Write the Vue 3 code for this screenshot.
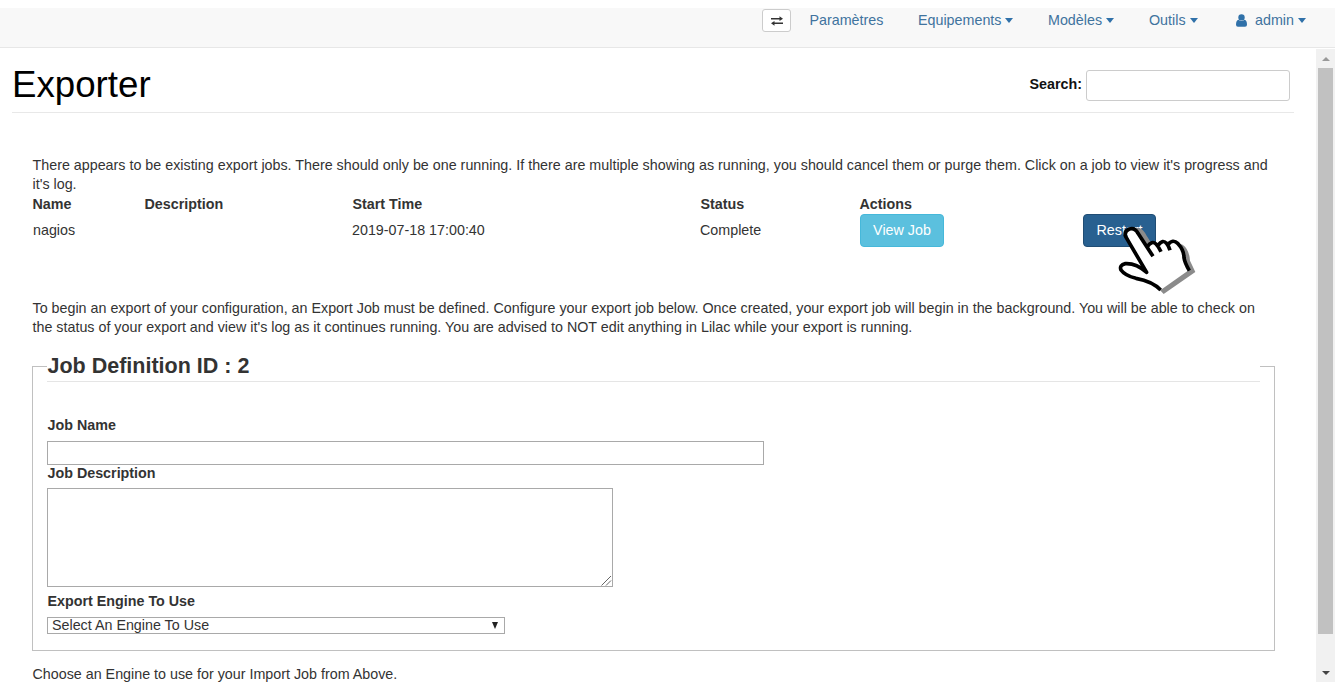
<script setup>
const menus = [
  { label: 'Equipements', cls: 'equipements' },
  { label: 'Modèles', cls: 'modeles' },
  { label: 'Outils', cls: 'outils' },
]
</script>

<template>
  <div class="page">
    <nav class="navbar">
      <button class="toggle" aria-label="Toggle">
        <svg width="14" height="10" viewBox="0 0 14 10">
          <path d="M1 2.7H10M4 7.3H13" stroke="#333" stroke-width="1.4" />
          <path d="M9.5 .3L13 2.7L9.5 5zM4.5 5L1 7.3L4.5 9.7z" fill="#333" />
        </svg>
      </button>
      <a class="item parametres">Paramètres</a>
      <a v-for="m in menus" :key="m.label" class="item" :class="m.cls">{{ m.label }}<i class="caret"></i></a>
      <a class="item admin">
        <svg class="user" width="11" height="13" viewBox="0 0 11 13">
          <circle cx="5.5" cy="3.4" r="3.2" fill="#3071a9" />
          <path d="M2.5 5.7Q5.5 8.4 8.5 5.7Q11 6.3 11 10.8Q11 12.7 9 12.7H2Q0 12.7 0 10.8Q0 6.3 2.5 5.7z" fill="#3071a9" />
        </svg>admin<i class="caret"></i>
      </a>
    </nav>

    <div class="body">
      <main class="content">
        <header class="head">
          <h1>Exporter</h1>
          <label class="search"><b>Search:</b><input type="text" /></label>
        </header>

        <section class="main">
          <p class="intro">There appears to be existing export jobs. There should only be one running. If there are multiple showing as running, you should cancel them or purge them. Click on a job to view it's progress and<br />it's log.</p>

          <div class="jobs titles">
            <b>Name</b><b>Description</b><b>Start Time</b><b>Status</b><b>Actions</b>
          </div>
          <div class="jobs row">
            <span>nagios</span><span></span><span class="date">2019-07-18 17:00:40</span><span class="status">Complete</span>
            <span><button class="btn view">View Job</button></span>
            <span class="restart-cell">
              <button class="btn restart">Restart</button>
              <svg class="hand" width="90" height="80" viewBox="0 0 270 240">
                <path d="M75 26L88 24Q100 28 109 46L128 76L150 66L185 64L218 74Q238 88 240 122L256 156L161 222L146 206Z" fill="#8b8b8b" />
                <path d="M152 210C135 192 105 180 78 175Q45 167 35 150Q28 135 46 131Q78 129 108 156L54 52Q48 34 61 28Q76 24 84 42L112 76Q131 60 146 77Q160 58 176 75Q190 56 210 78Q222 92 223 118L238 149Z" fill="#fff" />
                <path d="M152 210C135 192 105 180 78 175Q45 167 33 150Q27 135 46 131Q78 129 110 157L47 50Q41 34 58 27Q75 22 84 40L129 109M112 80Q126 60 138 72Q146 80 153 95M144 76Q158 56 170 71Q176 78 180 91M174 74Q188 55 204 71Q222 90 222 113Q224 127 238 152" fill="none" stroke="#000" stroke-width="11" stroke-linejoin="round" />
              </svg>
            </span>
          </div>

          <p class="guide">To begin an export of your configuration, an Export Job must be defined. Configure your export job below. Once created, your export job will begin in the background. You will be able to check on<br />the status of your export and view it's log as it continues running. You are advised to NOT edit anything in Lilac while your export is running.</p>

          <fieldset>
            <legend>Job Definition ID : 2</legend>
            <label class="field">Job Name</label>
            <input class="name" type="text" />
            <label class="field description">Job Description</label>
            <div class="area">
              <svg width="11" height="11" viewBox="0 0 11 11"><path d="M.5 10.5L10 1M5 10.5L10 5.5" stroke="#666" fill="none" /></svg>
            </div>
            <label class="field engine">Export Engine To Use</label>
            <div class="select"><span>Select An Engine To Use</span><i></i></div>
          </fieldset>

          <p class="foot">Choose an Engine to use for your Import Job from Above.</p>
        </section>
      </main>

      <aside class="scrollbar">
        <i class="up"></i>
        <div class="thumb"></div>
        <i class="down"></i>
      </aside>
    </div>
  </div>
</template>

<style>
body { background: #fff; overflow: hidden; }
</style>

<style scoped>
* { box-sizing: border-box; }
.page {
  width: 1336px; height: 684px; padding: 8px 1px 2px 0; display: flex; flex-direction: column;
  font: 14.3px/19.4px "Liberation Sans", Arial, sans-serif; color: #333; overflow: hidden;
}
p, h1 { margin: 0; white-space: nowrap; }
b { font-weight: 700; }
.navbar {
  flex: none; height: 40px; background: #f8f8f8; border-bottom: 1px solid #e7e7e7;
  display: flex; align-items: flex-start; padding-left: 762px;
}
.toggle {
  width: 29px; height: 23px; margin-top: 1px; padding: 0; background: #fff; border: 1px solid #ccc; border-radius: 3px;
  display: flex; align-items: center; justify-content: center;
}
.item { display: flex; align-items: center; height: 25px; color: #40739e; white-space: nowrap; }
.parametres { width: 108.5px; margin-left: 18.5px; }
.equipements { width: 130px; }
.modeles { width: 101px; }
.outils { width: 87px; }
.user { margin-right: 8px; }
.caret { border: 4.5px solid transparent; border-top: 5px solid #3071a9; border-bottom: 0; margin: 0 0 1px 4px; }
.body { flex: 1; min-height: 0; display: flex; }
.content { width: 1316px; height: 634px; overflow: hidden; padding: 0 22px 0 12px; }
.head { height: 65px; border-bottom: 1px solid #e8e8e8; display: flex; justify-content: space-between; padding: 22px 4px 0 0; }
h1 { font-size: 36.7px; line-height: 30px; font-weight: 400; color: #000; }
.search { display: flex; align-items: center; height: 31px; color: #111; }
.search b { margin-bottom: 2px; }
.search input { width: 204px; height: 31px; margin-left: 4px; border: 1px solid #ccc; border-radius: 3px; background: #fff; }
.main { padding: 43px 0 0 20.5px; }
.jobs { display: grid; grid-template-columns: 112px 208px 348px 159px 223px 1fr; white-space: nowrap; }
.titles { height: 19px; line-height: 18px; }
.row { height: 33px; align-items: center; padding-left: .5px; }
.date, .status { margin-left: -1px; }
.btn {
  display: block; height: 33px; padding: 0; color: #fff; font: inherit;
  border-radius: 4px; border: 1px solid #46b8da;
}
.view { width: 84px; background: #5bc0de; }
.restart { width: 73px; background: #286090; border-color: #204d74; }
.restart-cell { position: relative; }
.hand { position: absolute; left: 27px; top: 6px; }
.guide { margin-top: 52px; }
fieldset { width: 1243px; height: 299px; margin: 14px 0 0 -.5px; padding: 0 14px; border: 1px solid #c0c0c0; }
legend {
  width: 1213px; height: 30px; padding: 0 0 0 .5px; margin-bottom: 34px; border-bottom: 1px solid #e5e5e5;
  font-size: 21.5px; line-height: 28px; font-weight: 700;
}
.field { display: block; height: 19px; line-height: 19px; padding-left: .5px; font-weight: 700; }
.name { display: block; width: 717px; height: 24px; margin-top: 6px; border: 1px solid #a9a9a9; background: #fff; }
.description { margin-top: -1px; }
.area { width: 566px; height: 99px; margin-top: 5px; border: 1px solid #a9a9a9; display: flex; align-items: flex-end; justify-content: flex-end; }
.engine { margin-top: 5px; }
.select { width: 458px; height: 17px; margin-top: 6px; padding: 0 6px 0 4px; border: 1px solid #a9a9a9; display: flex; align-items: center; justify-content: space-between; line-height: 15px; }
.select i { border: 3.5px solid transparent; border-top: 7px solid #222; border-bottom: 0; }
.foot { margin-top: 14px; }
.scrollbar { width: 19px; height: 633px; margin-top: 1px; background: #f1f1f1; display: flex; flex-direction: column; align-items: center; }
.up { border: 4px solid transparent; border-bottom: 4px solid #999; border-top: 0; margin: 8px 0 7px; }
.thumb { width: 15px; height: 566px; background: #c1c1c1; }
.down { border: 4px solid transparent; border-top: 4px solid #444; border-bottom: 0; margin-top: 37px; }
</style>
